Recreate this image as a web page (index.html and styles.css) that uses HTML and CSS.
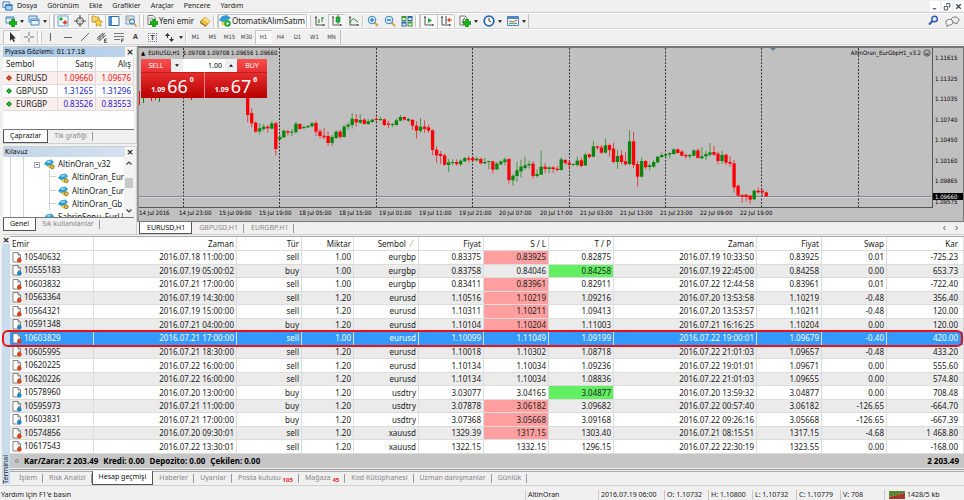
FILE: index.html
```html
<!DOCTYPE html>
<html lang="tr">
<head>
    <meta charset="UTF-8">
    <meta name="viewport" content="width=device-width, initial-scale=1.0">
    <title>EURUSD,H1</title>
    <link rel="stylesheet" href="styles.css">
</head>
<body>
    <!-- shared icons -->
    <svg class="sprite">
        <symbol id="i-down" viewBox="0 0 5 3"><path d="M0 0h5L2.500 3z" fill="#111"/></symbol>
        <symbol id="i-doc" viewBox="0 0 10 11"><path d="M1 .5h5l2.500 2.500v7H1z" fill="#fff" stroke="#666" stroke-width=".8"/><path d="M6 .5V3h2.500" fill="none" stroke="#666" stroke-width=".8"/><path d="M6 5h2v3H6z" fill="#aaa"/><circle cx="7.300" cy="8.300" r="2.300" fill="currentColor"/></symbol>
        <symbol id="i-hat" viewBox="0 0 12 11"><path d="M3 4l1 5 4 1 2-5z" fill="#f3cf4c"/><path d="M0 5l3-4 5-1 3 3-4 3-4 1z" fill="#2f9bd0"/><path d="M3 2l4-1 1 2-4 1z" fill="#8fd3f0"/><circle cx="9" cy="8" r="2.200" fill="#e4b93c" stroke="#5b5b3b" stroke-width=".7"/></symbol>
        <symbol id="i-plus" viewBox="0 0 8 8"><path d="M2.500 0h3v2.500H8v3H5.500V8h-3V5.500H0v-3h2.500z" fill="#12b312" stroke="#067806" stroke-width=".5"/></symbol>
        <symbol id="i-axes" viewBox="0 0 12 12"><path d="M2 1v9h9M1 2.500h2M9.500 9v2" fill="none" stroke="#555"/></symbol>
    </svg>

    <header class="menu-bar">
        <svg class="app-icon" viewBox="0 0 12 12"><path d="M1 1h7v6H1z" fill="#dff0fb" stroke="#3d7ec0"/><path d="M4 4h7v6H4z" fill="#a8d0f0" stroke="#2f6bb0"/><path d="M4 5h7" stroke="#2f6bb0"/></svg>
        <nav class="menu">
            <a href="#">Dosya</a>
            <a href="#">Görünüm</a>
            <a href="#">Ekle</a>
            <a href="#">Grafikler</a>
            <a href="#">Araçlar</a>
            <a href="#">Pencere</a>
            <a href="#">Yardım</a>
        </nav>
        <div class="window-buttons">
            <button aria-label="Minimize"><svg viewBox="0 0 8 8"><path d="M2.500 6h3" stroke="#345" stroke-width="1"/></svg></button>
            <button aria-label="Restore"><svg viewBox="0 0 8 8"><path d="M2 4h3v3H2zM4 2.500V1.500h3v3H6" fill="none" stroke="#345" stroke-width=".8"/></svg></button>
            <button aria-label="Close"><svg viewBox="0 0 8 8"><path d="M2 2l4 4M6 2L2 6" stroke="#345" stroke-width="1.100"/></svg></button>
        </div>
    </header>

    <div class="toolbar">
        <button class="tool drop" aria-label="New chart"><svg viewBox="0 0 12 12"><path d="M1 2h8v6H1z" fill="#e8f4fb" stroke="#4a87bd"/><path d="M1 3h8" stroke="#4a87bd"/><use href="#i-plus" x="4" y="4" width="8" height="8"/></svg><svg class="caret"><use href="#i-down"/></svg></button>
        <button class="tool drop" aria-label="Profiles"><svg viewBox="0 0 12 12"><path d="M1 1h8v6H1z" fill="#cfe6f7" stroke="#4a87bd"/><path d="M3 4h8v6H3z" fill="#e8f4fb" stroke="#4a87bd"/><path d="M3 5.500h8" stroke="#4a87bd"/></svg><svg class="caret"><use href="#i-down"/></svg></button>
        <span class="sep"></span>
        <button class="tool on" aria-label="Market watch"><svg viewBox="0 0 12 12"><path d="M1 1h10v10H1z" fill="#f4faff" stroke="#6ba6d8"/><path d="M4 2l2 2-2 2-2-2z" fill="#1fa51f"/><path d="M8 5l2.500 2.500L8 10 5.500 7.500z" fill="#e04a20"/></svg></button>
        <button class="tool" aria-label="Data window"><svg viewBox="0 0 12 12"><circle cx="6" cy="6" r="3.500" fill="none" stroke="#555"/><path d="M6 0v5M6 7v5M0 6h5M7 6h5" stroke="#555"/></svg></button>
        <button class="tool on" aria-label="Navigator"><svg viewBox="0 0 12 12"><path d="M1 3V1h3l1 1h3v5H1z" fill="#f6d878" stroke="#b98a1c" stroke-width=".8"/><path d="M7.500 3.500l1.300 2.500 2.700.4-2 2 .5 2.800-2.500-1.300L5 11.200l.5-2.800-2-2 2.700-.4z" fill="#ffd84a" stroke="#b98a1c" stroke-width=".8"/></svg></button>
        <button class="tool on" aria-label="Terminal"><svg viewBox="0 0 12 12"><path d="M1 1.500h10v9H1z" fill="#fff" stroke="#2d6dae"/><path d="M1 2h3v8H1z" fill="#4d8ccc"/></svg></button>
        <button class="tool" aria-label="Tester"><svg viewBox="0 0 12 12"><path d="M1 1h8v8H1z" fill="#e4f0f8" stroke="#6c9cc4"/><path d="M3 2v4M5 3v4" stroke="#d09040"/><circle cx="7" cy="6.500" r="2.500" fill="#bfe3fa" stroke="#3d6fa0"/><path d="M9 8.500l2.500 3" stroke="#c49a30" stroke-width="1.500"/></svg></button>
        <span class="sep"></span>
        <button class="tool order"><svg viewBox="0 0 12 12"><path d="M2 .5h5l2 2v7H2z" fill="#fff" stroke="#777"/><path d="M3 3h4M3 5h3" stroke="#999"/><use href="#i-plus" x="4" y="4" width="8" height="8"/></svg>Yeni emir</button>
        <button class="tool" aria-label="MetaEditor"><svg viewBox="0 0 12 12"><path d="M1 7l5-5 5 4-4 5z" fill="#f0bd3c" stroke="#a5741a" stroke-width=".8"/><path d="M4 4l2-2 5 4-2 2z" fill="#ffe48a"/><path d="M1 7l6 4v1L1 8z" fill="#8d5c14"/></svg></button>
        <span class="sep"></span>
        <button class="tool auto on"><svg viewBox="0 0 12 12"><path d="M2 5l1 5 5 1 2-6z" fill="#f3cf4c"/><path d="M0 5l3-4 5-1 4 3-5 3-4 1z" fill="#2f9bd0"/><circle cx="8.500" cy="8.500" r="3.200" fill="#1aa62a"/><path d="M7.500 6.800v3.400l3-1.700z" fill="#fff"/></svg>OtomatikAlımSatım</button>
        <span class="sep"></span>
        <button class="tool" aria-label="Bar chart"><svg viewBox="0 0 12 12"><use href="#i-axes"/><path d="M5 4v4M4 7h1M8 2v5M8 3h2" fill="none" stroke="#19932c"/></svg></button>
        <button class="tool on" aria-label="Candlesticks"><svg viewBox="0 0 12 12"><use href="#i-axes"/><path d="M7 0v9" stroke="#19932c"/><path d="M5 2h4v5H5z" fill="#25b53a" stroke="#0c741c" stroke-width=".6"/></svg></button>
        <button class="tool" aria-label="Line chart"><svg viewBox="0 0 12 12"><use href="#i-axes"/><path d="M2 8c2-5 4-5 5-3l3 2" fill="none" stroke="#19932c"/></svg></button>
        <span class="sep thin"></span>
        <button class="tool" aria-label="Zoom in"><svg viewBox="0 0 12 12"><path d="M7 7l4 4" stroke="#d3a634" stroke-width="2"/><circle cx="5" cy="5" r="3.800" fill="#d6eefc" stroke="#3b83be"/><path d="M3 5h4M5 3v4" stroke="#1d65a8" stroke-width="1.200"/></svg></button>
        <button class="tool" aria-label="Zoom out"><svg viewBox="0 0 12 12"><path d="M7 7l4 4" stroke="#d3a634" stroke-width="2"/><circle cx="5" cy="5" r="3.800" fill="#d6eefc" stroke="#3b83be"/><path d="M3 5h4" stroke="#1d65a8" stroke-width="1.200"/></svg></button>
        <button class="tool" aria-label="Tile windows"><svg viewBox="0 0 12 12"><path d="M.5 1h5v5h-5zM6.500 6.500h5v5h-5z" fill="#3a9a2a"/><path d="M6.500 1h5v5h-5zM.5 6.500h5v5h-5z" fill="#2b5fb4"/><path d="M1.500 3h3v2h-3zM7.500 3h3v2h-3zM1.500 8.500h3v2h-3zM7.500 8.500h3v2h-3z" fill="#e6f4e6"/></svg></button>
        <span class="sep"></span>
        <button class="tool on" aria-label="Auto scroll"><svg viewBox="0 0 12 12"><use href="#i-axes"/><path d="M5 3l4 2.500L5 8z" fill="#1ea832"/></svg></button>
        <button class="tool on" aria-label="Chart shift"><svg viewBox="0 0 12 12"><use href="#i-axes"/><path d="M6 1v8" stroke="#445"/><path d="M7 5l3-2.500v2h2v1h-2v2z" fill="#d8431f"/></svg></button>
        <span class="sep thin"></span>
        <button class="tool drop" aria-label="Indicators"><svg viewBox="0 0 12 12"><path d="M1 1h5l2 2v7H1z" fill="#f5f5f5" stroke="#777"/><path d="M3 8c1 0 1-5 3-5" fill="none" stroke="#555"/><use href="#i-plus" x="4" y="4" width="8" height="8"/></svg><svg class="caret"><use href="#i-down"/></svg></button>
        <button class="tool drop" aria-label="Periods"><svg viewBox="0 0 12 12"><circle cx="6" cy="6" r="4.800" fill="#fff" stroke="#2465b5" stroke-width="1.800"/><path d="M6 3v3l2 1" fill="none" stroke="#333"/></svg><svg class="caret"><use href="#i-down"/></svg></button>
        <button class="tool drop" aria-label="Templates"><svg viewBox="0 0 12 12"><path d="M.5 1.500h11v9H.5z" fill="#f2f9ff" stroke="#4d87bf"/><path d="M1 3h10" stroke="#4d87bf" stroke-width="2"/><path d="M2 7l2-1 2 1 4-2" fill="none" stroke="#c8562b"/><path d="M2 9l3-1 2 1 3-1" fill="none" stroke="#2c9840"/></svg><svg class="caret"><use href="#i-down"/></svg></button>
        <span class="toolbar-end"></span>
        <div class="toolbar-right">
            <button class="tool" aria-label="Search"><svg viewBox="0 0 12 12"><circle cx="7.500" cy="4" r="2.800" fill="#e9f2ff" stroke="#2c55b5" stroke-width="1.400"/><path d="M5.500 6L2 9.500" stroke="#2c55b5" stroke-width="2"/></svg></button>
            <button class="tool chat" aria-label="Chat"><svg viewBox="0 0 15 12"><path d="M6 5c0-4 8-4 8 0 0 1-1 2-2 2.500V9L10 8C7 8 6 6.500 6 5z" fill="#eee" stroke="#777"/><path d="M1 7c0-3.500 7-3.500 7 0 0 2-2 3-4 3l-2 1.500V9.500C1 9 1 8 1 7z" fill="#f5f5f5" stroke="#777"/></svg></button>
        </div>
    </div>

    <div class="toolbar">
        <button class="tool on" aria-label="Cursor"><svg viewBox="0 0 12 12"><path d="M4 1v9l2-2 1.500 3 1.500-.7L7.500 7.500H10z" fill="#333"/></svg></button>
        <button class="tool" aria-label="Crosshair"><svg viewBox="0 0 12 12"><path d="M6 1v4M6 7v4M1 6h4M7 6h4" stroke="#777"/></svg></button>
        <span class="sep"></span>
        <button class="tool" aria-label="Vertical line"><svg viewBox="0 0 12 12"><path d="M5.500 2v8" stroke="#666"/></svg></button>
        <button class="tool" aria-label="Horizontal line"><svg viewBox="0 0 12 12"><path d="M2 6.500h8" stroke="#666"/></svg></button>
        <button class="tool" aria-label="Trend line"><svg viewBox="0 0 12 12"><path d="M2 10l8-8" stroke="#666"/></svg></button>
        <button class="tool" aria-label="Channel"><svg viewBox="0 0 12 12"><path d="M1 7l6-5M1 9l8-7M3 10l7-6M4 5v4M7 3v4" stroke="#555" stroke-width=".9"/><path d="M11 8H8.500v3.500H11M8.500 9.700h2" fill="none" stroke="#444" stroke-width=".8"/></svg></button>
        <button class="tool" aria-label="Fibonacci"><svg viewBox="0 0 12 12"><path d="M1 2.500h10M1 5.500h10M1 8.500h6" stroke="#777"/><path d="M11 8H8.500v3.500M8.500 9.700h2" fill="none" stroke="#444" stroke-width=".8"/></svg></button>
        <button class="tool letter">A</button>
        <button class="tool letter"><span class="label-box">T</span></button>
        <button class="tool drop" aria-label="Arrows"><svg viewBox="0 0 12 12"><path d="M1 5l2.500-3L6 5zM3 5h1v2H3zM5 8h5l-2.500 3zM7 6h1v2H7z" fill="#333"/></svg><svg class="caret"><use href="#i-down"/></svg></button>
        <span class="sep thin"></span>
        <button class="tool period">M1</button>
        <button class="tool period">M5</button>
        <button class="tool period">M15</button>
        <button class="tool period">M30</button>
        <button class="tool period on">H1</button>
        <button class="tool period">H4</button>
        <button class="tool period">D1</button>
        <button class="tool period">W1</button>
        <button class="tool period">MN</button>
        <span class="toolbar-end"></span>
    </div>

    <main class="workspace">
        <aside class="side">
            <section class="panel">
                <div class="panel-title"><h2>Piyasa Gözlemi: 01:17:18</h2><button class="close" aria-label="Close">×</button></div>
                <div class="quotes-box">
                    <table class="quotes">
                        <thead>
                            <tr><th>Sembol</th><th>Satış</th><th>Alış</th></tr>
                        </thead>
                        <tbody>
                            <tr class="down"><td><i class="mark"></i>EURUSD</td><td>1.09660</td><td>1.09676</td></tr>
                            <tr><td><i class="mark"></i>GBPUSD</td><td>1.31265</td><td>1.31296</td></tr>
                            <tr class="tint"><td><i class="mark"></i>EURGBP</td><td>0.83526</td><td>0.83553</td></tr>
                        </tbody>
                    </table>
                </div>
                <div class="tabs side-tabs">
                    <a class="tab active" href="#">Çaprazlar</a>
                    <a class="tab" href="#">Tik grafiği</a>
                </div>
            </section>

            <section class="panel navigator">
                <div class="panel-title"><h2>Kılavuz</h2><button class="close" aria-label="Close">×</button></div>
                <div class="tree-box">
                    <ul class="tree">
                        <li class="open"><i class="minus"></i><svg><use href="#i-hat"/></svg>AltinOran_v32
                            <ul>
                                <li><svg><use href="#i-hat"/></svg>AltinOran_Eur</li>
                                <li><svg><use href="#i-hat"/></svg>AltinOran_Eur</li>
                                <li><svg><use href="#i-hat"/></svg>AltinOran_Gb</li>
                            </ul>
                        </li>
                        <li class="next"><svg><use href="#i-hat"/></svg>SabrinSonu_EurU</li>
                    </ul>
                    <div class="scrollbar">
                        <svg viewBox="0 0 8 8"><path d="M1.500 5.500L4 3l2.500 2.500" fill="none" stroke="#444" stroke-width="1.200"/></svg>
                        <span class="thumb"></span>
                        <svg viewBox="0 0 8 8"><path d="M1.500 2.500L4 5l2.500-2.500" fill="none" stroke="#444" stroke-width="1.200"/></svg>
                    </div>
                </div>
                <div class="tabs side-tabs">
                    <a class="tab active" href="#">Genel</a>
                    <a class="tab" href="#">Sık kullanılanlar</a>
                </div>
            </section>
        </aside>

        <section class="chart">
            <div class="chart-window">
                <div class="plot">
                    <svg class="candles" id="candles"></svg>
                    <div class="chart-title"><span class="up-mark">▲</span><span>EURUSD,H1</span><span>1.09708 1.09708 1.09656 1.09660</span></div>
                    <div class="expert">AltinOran_EurGbpH1_v3.2 <svg viewBox="0 0 10 10"><circle cx="5" cy="5" r="4" fill="none" stroke="#222" stroke-width=".8"/><path d="M3 3.800h1M6 3.800h1M2.800 6c1 1.800 3.400 1.800 4.400 0z" fill="none" stroke="#222" stroke-width=".8"/></svg></div>
                    <form class="trade">
                        <button type="button" class="side-btn">SELL</button>
                        <div class="volume">
                            <button type="button" aria-label="Less"><svg><use href="#i-down"/></svg></button>
                            <input type="text" value="1.00" aria-label="Volume">
                            <button type="button" aria-label="More"><svg class="flip"><use href="#i-down"/></svg></button>
                        </div>
                        <button type="button" class="side-btn">BUY</button>
                        <button type="button" class="price"><small>1.09</small><b>66</b><sup>0</sup></button>
                        <button type="button" class="price"><small>1.09</small><b>67</b><sup>6</sup></button>
                    </form>
                </div>
                <div class="price-axis">
                    <span>1.11615</span><span>1.11325</span><span>1.11035</span><span>1.10740</span><span>1.10450</span><span>1.10160</span><span>1.09865</span><span>1.09575</span>
                    <span class="current">1.09660</span>
                </div>
                <div class="time-axis">
                    <span>14 Jul 2016</span><span>14 Jul 23:00</span><span>15 Jul 09:00</span><span>15 Jul 19:00</span><span>18 Jul 05:00</span><span>18 Jul 15:00</span><span>19 Jul 01:00</span><span>19 Jul 11:00</span><span>19 Jul 21:00</span><span>20 Jul 07:00</span><span>20 Jul 17:00</span><span>21 Jul 03:00</span><span>21 Jul 13:00</span><span>21 Jul 23:00</span><span>22 Jul 09:00</span><span>22 Jul 19:00</span>
                </div>
            </div>
            <div class="tabs chart-tabs">
                <a class="tab active" href="#">EURUSD,H1</a>
                <a class="tab" href="#">GBPUSD,H1</a>
                <a class="tab" href="#">EURGBP,H1</a>
                <div class="tab-arrows"><svg viewBox="0 0 5 6"><path d="M3.500 1l-2 2 2 2" fill="none" stroke="#555"/></svg><svg viewBox="0 0 5 6"><path d="M1.500 1l2 2-2 2" fill="none" stroke="#555"/></svg></div>
            </div>
        </section>
    </main>

    <section class="terminal">
        <div class="terminal-side"><button class="close" aria-label="Close">×</button><span>Terminal</span></div>
        <div class="terminal-body">
            <div class="history-box">
                <table class="history">
                    <colgroup><col class="c-order"><col class="c-time"><col class="c-std"><col class="c-lot"><col class="c-std"><col class="c-std"><col class="c-std"><col class="c-std"><col class="c-time"><col class="c-std"><col class="c-std"><col></colgroup>
                    <thead>
                        <tr><th>Emir</th><th>Zaman</th><th>Tür</th><th>Miktar</th><th>Sembol <span class="sort">⁄</span></th><th>Fiyat</th><th>S / L</th><th>T / P</th><th>Zaman</th><th>Fiyat</th><th>Swap</th><th>Kar</th></tr>
                    </thead>
                    <tbody id="rows"></tbody>
                    <tfoot>
                        <tr><td colspan="11"><i class="dot"></i><span>Kar/Zarar: 2 203.49</span><span>Kredi: 0.00</span><span>Depozito: 0.00</span><span>Çekilen: 0.00</span></td><td>2 203.49</td></tr>
                    </tfoot>
                </table>
            </div>
            <div class="tabs terminal-tabs">
                <a class="tab" href="#">İşlem</a>
                <a class="tab" href="#">Risk Analizi</a>
                <a class="tab active" href="#">Hesap geçmişi</a>
                <a class="tab" href="#">Haberler</a>
                <a class="tab" href="#">Uyarılar</a>
                <a class="tab" href="#">Posta kutusu <sub>105</sub></a>
                <a class="tab" href="#">Mağaza <sub>45</sub></a>
                <a class="tab" href="#">Kod Kütüphanesi</a>
                <a class="tab" href="#">Uzman danışmanlar</a>
                <a class="tab" href="#">Günlük</a>
            </div>
        </div>
    </section>

    <footer class="status">
        <span class="hint">Yardım için F1'e basın</span>
        <span class="s-name">AltinOran</span>
        <span class="s-date">2016.07.19 06:00</span>
        <span>O: 1.10732</span>
        <span>H: 1.10800</span>
        <span>L: 1.10732</span>
        <span>C: 1.10779</span>
        <span>V: 708</span>
        <span class="s-net"><svg viewBox="0 0 16 8"><path d="M0 0h16v2L0 6z" fill="#5c8f2b"/><path d="M16 2v6H0V6z" fill="#b8352b"/><path d="M2.500 0v8M5.500 0v8M8.500 0v8M11.500 0v8M14.500 0v8" stroke="#333" stroke-width=".5" opacity=".5"/></svg>1428/5 kb</span>
    </footer>

    <script src="script.js"></script>
</body>
</html>
```

FILE: styles.css
```css
* {
    box-sizing: border-box;
}
body {
    margin: 0;
    height: 100vh;
    display: flex;
    flex-direction: column;
    background-color: #f0f0f0;
    color: #222;
    font: 7px/10px "Noto Sans", "Open Sans", sans-serif;
    overflow: hidden;
}
a {
    color: inherit;
    text-decoration: none;
}
button {
    margin: 0;
    padding: 0;
    border: 0;
    background: none;
    color: inherit;
    font: inherit;
}
h2 {
    margin: 0;
    font: inherit;
}
svg {
    display: block;
    flex: none;
}
.sprite {
    position: absolute;
    width: 0;
    height: 0;
}

/* menu */
.menu-bar {
    display: flex;
    align-items: center;
    flex: none;
    height: 13px;
    padding-left: 2px;
    border-bottom: 1px solid #cfcfcf;
}
.app-icon {
    width: 11px;
    height: 11px;
}
.menu {
    display: flex;
    gap: 10px;
    margin-left: 4px;
}
.window-buttons {
    display: flex;
    gap: 2px;
    margin-left: auto;
}
.window-buttons button {
    width: 10px;
    height: 10px;
    background-color: #fff;
}
.window-buttons svg {
    width: 9px;
    height: 9px;
}

/* toolbars */
.toolbar {
    display: flex;
    flex: none;
    height: 16px;
    padding-left: 3px;
    border-top: 1px solid #fff;
    border-bottom: 1px solid #d6d6d6;
    font-size: 8px;
}
.tool {
    display: flex;
    align-items: center;
    justify-content: center;
    gap: 1px;
    width: 17px;
}
.tool svg {
    width: 12px;
    height: 12px;
}
.tool.on {
    background-color: #f8f8f8;
    box-shadow: inset 1px 1px #c4c4c4;
}
.drop {
    width: 24px;
    gap: 3px;
}
.drop:nth-child(-n+2) {
    width: 23px;
}
.tool .caret {
    width: 4px;
    height: 3px;
}
.order {
    width: 52px;
}
.auto {
    width: 88px;
}
.letter {
    color: #444;
    font-weight: bold;
    font-size: 7px;
}
.label-box {
    width: 9px;
    height: 9px;
    border: 1px dotted #777;
    line-height: 7px;
}
.period {
    color: #444;
    font: 6px/10px "DejaVu Sans Condensed", "DejaVu Sans", sans-serif;
}
.sep {
    width: 5px;
    border: 0 solid #c8c8c8;
    border-width: 0 1px;
    background-color: #fafafa;
    margin: 1px 0;
}
.sep.thin {
    width: 2px;
    border-width: 0 0 0 1px;
}
.toolbar-end {
    width: 1px;
    background-color: #c0c0c0;
}
.toolbar-right {
    display: flex;
    gap: 3px;
    margin-left: auto;
    padding-right: 3px;
}
.tool.chat svg {
    width: 15px;
}

/* workspace */
.workspace {
    display: flex;
    flex: 4 1 0;
    min-height: 0;
    padding-top: 1px;
}
.side {
    display: flex;
    flex-direction: column;
    gap: 2px;
    width: 137px;
    padding-left: 3px;
}
.panel {
    display: flex;
    flex-direction: column;
    height: 98px;
    padding-right: 2px;
    border: 1px solid #d0d0d0;
    border-left: 0;
}
.navigator {
    flex: 1;
    min-height: 0;
    height: auto;
    padding-bottom: 3px;
}
.panel-title {
    display: flex;
    align-items: center;
    justify-content: space-between;
    flex: none;
    height: 10px;
    padding-left: 2px;
    background: linear-gradient(90deg, #a8c8e6, #bcd3ea) no-repeat #f6f6f6;
    background-size: 122px 100%;
}
.navigator .panel-title {
    background-image: linear-gradient(90deg, #c4d5e6, #d4e1ee);
}
.panel-title h2 {
    color: #000;
    font: 7px/10px "DejaVu Sans Condensed", "DejaVu Sans", sans-serif;
}
.close {
    width: 8px;
    font: bold 9px/8px "DejaVu Sans", sans-serif;
}
.quotes-box {
    flex: 1;
    background-color: #fff;
    border-bottom: 1px solid #777;
}
.quotes {
    width: 100%;
    border-collapse: separate;
    border-spacing: 0;
    table-layout: fixed;
    font-size: 8px;
    line-height: 12px;
}
.quotes th, .quotes td {
    padding: 0 2px 0 0;
    border: 1px solid #dcdcdc;
    border-width: 0 1px 1px 0;
    text-align: right;
    font-weight: normal;
    color: #2020d0;
}
.quotes th {
    color: #222;
    height: 15px;
}
.quotes th:first-child, .quotes td:first-child {
    width: 55px;
    padding-left: 3px;
    text-align: left;
    color: #222;
}
.quotes .down td:not(:first-child) {
    color: #f01414;
}
.quotes .down, .quotes .tint {
    background-color: #fdeeee;
}
.mark {
    display: inline-block;
    width: 4px;
    height: 4px;
    margin: 0 5px 1px 1px;
    background-color: #2ecc40;
    border: 1px solid #0f7a1c;
    transform: rotate(45deg);
}
.down .mark {
    background-color: #f0672f;
    border-color: #a03010;
}

/* tabs */
.tabs {
    display: flex;
    flex: none;
    height: 13px;
    color: #888;
}
.tab {
    position: relative;
    padding: 0 6px 0 7px;
    line-height: 12px;
    white-space: nowrap;
}
.tab:not(.active)::after {
    content: "";
    position: absolute;
    right: 0;
    top: 2px;
    height: 9px;
    border-right: 1px solid #999;
}
.tab.active {
    color: #111;
    background-color: #fff;
    border: 1px solid #555;
    border-top: 0;
}
.side-tabs .tab {
    padding: 0 6px;
}

/* navigator */
.tree-box {
    display: flex;
    flex: 1;
    min-height: 0;
    background-color: #fff;
    border-bottom: 1px solid #777;
}
.tree, .tree ul {
    margin: 0;
    padding: 0;
    list-style: none;
}
.tree {
    flex: 1;
    overflow: hidden;
    padding-left: 31px;
    font-size: 8px;
    line-height: 13px;
    white-space: nowrap;
    background: linear-gradient(#d4d4d4, #d4d4d4) 7px 0 / 1px 100% no-repeat, linear-gradient(#d4d4d4, #d4d4d4) 20px 0 / 1px 100% no-repeat;
}
.tree svg {
    display: inline-block;
    width: 11px;
    height: 11px;
    margin-right: 3px;
    vertical-align: middle;
}
.tree ul {
    margin-left: 15px;
    border-left: 1px solid #d0d0d0;
}
.tree ul li {
    padding-left: 8px;
    background: linear-gradient(#d0d0d0, #d0d0d0) 0 6px / 6px 1px no-repeat;
}
.tree .next {
    padding-left: 10px;
}
.minus {
    display: inline-block;
    width: 6px;
    height: 6px;
    margin-right: 4px;
    border: 1px solid #a8a8b8;
    vertical-align: middle;
    background: linear-gradient(#5060a0, #5060a0) center / 2px 1px no-repeat;
}
.scrollbar {
    display: flex;
    flex-direction: column;
    justify-content: space-between;
    width: 10px;
    padding: 2px 1px;
    background-color: #f2f2f2;
}
.scrollbar svg {
    width: 8px;
    height: 8px;
}
.thumb {
    height: 10px;
    margin-bottom: 8px;
    background-color: #c8c8c8;
}

/* chart */
.chart {
    flex: 1;
    display: flex;
    flex-direction: column;
    min-width: 0;
}
.chart-window {
    flex: 1;
    display: grid;
    grid-template: 1fr 13px / 1fr 30px;
    min-height: 0;
    background-color: #c0c0c0;
    border: 1px solid #777;
    border-left: 2px solid #999;
    border-top-width: 2px;
    font: 6px/8px "DejaVu Sans Condensed", "DejaVu Sans", sans-serif;
    color: #000;
}
.plot {
    position: relative;
    border-right: 1px solid #555;
    border-bottom: 1px solid #555;
    min-height: 0;
}
.candles {
    position: absolute;
    inset: 0;
    width: 100%;
    height: 100%;
}
.chart-title {
    position: absolute;
    left: 2px;
    top: 1px;
    display: flex;
    gap: 3px;
}
.expert {
    position: absolute;
    right: 1px;
    top: 1px;
    display: flex;
    gap: 2px;
}
.expert svg {
    width: 8px;
    height: 8px;
}
.trade {
    position: absolute;
    left: 2px;
    top: 11px;
    display: grid;
    grid-template: 13px 26px / 30px 33px 33px 30px;
    width: 126px;
    color: #fff;
    font-family: "Noto Sans", "Open Sans", sans-serif;
}
.side-btn {
    background: linear-gradient(#f85050, #e83030);
    font-size: 7px;
}
.volume {
    grid-column: 2 / 4;
    display: flex;
    background-color: #fff;
}
.volume button {
    display: flex;
    align-items: center;
    justify-content: center;
    width: 12px;
    background-color: #eee;
}
.volume svg {
    width: 4px;
    height: 3px;
}
.volume .flip {
    transform: rotate(180deg);
}
.volume input {
    flex: 1;
    min-width: 0;
    padding: 0 3px 0 0;
    border: 0;
    text-align: right;
    font: 7px/12px "Noto Sans", "Open Sans", sans-serif;
}
.price {
    grid-column: span 2;
    display: flex;
    align-items: center;
    justify-content: center;
    gap: 2px;
    background: linear-gradient(#e62e2e, #b80000);
    border-top: 1px solid #c02020;
}
.price + .price {
    border-left: 1px solid #e88;
}
.price small {
    align-self: flex-end;
    font: bold 7px/16px "Noto Sans", sans-serif;
}
.price b {
    font: 18px/24px "Noto Sans", sans-serif;
}
.price sup {
    align-self: flex-start;
    font: bold 7px/14px "Noto Sans", sans-serif;
}
.price-axis {
    position: relative;
    display: flex;
    flex-direction: column;
    justify-content: space-between;
    padding: 6px 0 2px 2px;
}
.price-axis .current {
    position: absolute;
    left: 0;
    right: 0;
    bottom: 8px;
    padding-left: 2px;
    line-height: 7px;
    background-color: #000;
    color: #fff;
}
.time-axis {
    display: grid;
    grid-template-columns: repeat(9, 40px) 41px repeat(9, 40px);
    padding-top: 1px;
    white-space: nowrap;
}
.chart-tabs {
    padding-left: 2px;
    border-bottom: 1px solid #d0d0d0;
}
.tab-arrows {
    display: flex;
    gap: 7px;
    margin: 3px 5px 0 auto;
}
.tab-arrows svg {
    width: 5px;
    height: 6px;
}

/* terminal */
.terminal {
    display: flex;
    flex: none;
    height: 251px;
    padding-top: 1px;
    border-bottom: 1px solid #d0d0d0;
}
.terminal-side {
    display: flex;
    flex-direction: column;
    justify-content: space-between;
    width: 8px;
    margin-left: 2px;
    margin-bottom: 1px;
    background: linear-gradient(#f0f0f0 8px, #c9dcee 8px);
}
.terminal-side span {
    writing-mode: vertical-rl;
    transform: rotate(180deg);
    line-height: 8px;
}
.terminal-body {
    flex: 1;
    display: flex;
    flex-direction: column;
    min-width: 0;
}
.history-box {
    flex: 1;
    min-height: 0;
    border-bottom: 1px solid #999;
    padding-bottom: 1px;
}
.history {
    width: 100%;
    height: 100%;
    table-layout: fixed;
    border-collapse: separate;
    border-spacing: 0;
    background-color: #fff;
    border-top: 1px solid #aaa;
    font-size: 8px;
    line-height: 10px;
}
.c-order {
    width: 84px;
}
.c-time {
    width: 143px;
}
.c-std {
    width: 65px;
}
.c-lot {
    width: 52px;
}
.history th, .history td {
    padding: 0 2px 0 0;
    border-right: 1px solid #dcdcdc;
    border-bottom: 1px solid #dcdcdc;
    text-align: right;
    font-weight: normal;
    white-space: nowrap;
}
.history th, .history tfoot td {
    height: 14px;
}
.history th:first-child, .history td:first-child {
    padding-left: 2px;
    text-align: left;
}
.history th:last-child, .history td:last-child {
    padding-right: 5px;
}
.history td svg {
    display: inline-block;
    width: 10px;
    height: 11px;
    margin: -1px 2px 0 0;
    vertical-align: middle;
    color: #d84318;
}
.history td svg.buy {
    color: #1f86c8;
}
.history .sort {
    margin: 0 4px 0 3px;
    color: #999;
}
.history tbody tr:nth-child(even) {
    background-color: #ebebeb;
}
.history td.stop {
    background-color: #ff9f9f;
}
.history td.profit {
    background-color: #62f062;
}
.history tbody tr.selected {
    position: relative;
    background-color: #3399ff;
    color: #fff;
}
.ring {
    position: absolute;
    inset: -2px 1px -1px -8px;
    border: 2px solid #e3121b;
    border-radius: 6px;
}
.history tfoot td {
    background-color: #c6c6c6;
    border: 0;
    font-weight: bold;
    color: #000;
}
.history tfoot span {
    margin-right: 5px;
}
.dot {
    display: inline-block;
    width: 4px;
    height: 4px;
    margin: 0 5px 1px 3px;
    border: 1px solid #888;
    border-radius: 2px;
}
.terminal-tabs {
    height: 14px;
    margin-top: 1px;
    padding-left: 3px;
    border-top: 1px solid #aaa;
}
.terminal-tabs .tab {
    padding: 0 6px;
}
.terminal-tabs .active {
    margin-top: -1px;
}
.tab sub {
    color: #e02020;
    font: bold 6px/6px "Noto Sans", sans-serif;
    vertical-align: -2px;
}

/* status bar */
.status {
    display: flex;
    flex: none;
    align-items: center;
    height: 13px;
    margin-top: 1px;
    padding-top: 2px;
}
.status span {
    width: 44px;
    padding-left: 2px;
    border-left: 1px solid #c8c8c8;
    white-space: nowrap;
}
.status .hint {
    flex: 1;
    padding-left: 1px;
    border-left: 0;
}
.status .s-name {
    width: 73px;
}
.status .s-date {
    width: 66px;
}
.status .s-net {
    display: flex;
    align-items: center;
    gap: 2px;
    width: 80px;
    padding-left: 4px;
}
.s-net svg {
    width: 16px;
    height: 8px;
}
```

FILE: script.js
```js
// type, body top, body bottom, high, low - in thirds of a pixel
const candles = `r 150 213 140 235|r 207 238 193 250|r 236 263 232 267|g 253 262 238 271|g 248 255 240 262|r 248 253 243 266|g 238 254 231 256|r 238 315 233 334|g 279 286 272 288|g 260 280 257 282
r 262 266 257 275|g 263 266 255 276|g 239 264 234 270|r 240 255 238 257|g 249 252 245 256|g 246 250 243 252|g 238 247 234 250|r 237 263 230 276|r 262 276 255 284|r 275 280 251 286
r 276 297 262 305|g 279 297 273 305|g 263 282 259 285|r 263 279 258 285|g 248 279 243 281|g 242 248 235 257|g 224 243 207 254|r 225 235 210 248|g 228 236 210 240|r 227 240 222 242
g 232 240 225 242|g 227 234 225 237|r 225 228 218 235|g 225 228 217 232|r 226 243 223 246|r 238 242 230 252|g 240 243 237 250|g 229 243 223 245|g 219 230 213 232|r 219 227 217 230
g 225 230 222 234|r 228 245 224 258|r 245 260 232 284|g 248 260 222 267|r 248 255 229 266|r 250 260 242 267|r 259 318 256 334|r 317 334 307 356|r 330 336 321 360|r 334 362 328 365
g 355 363 345 385|g 354 357 346 364|r 354 360 346 366|g 350 361 346 366|g 342 352 339 354|r 343 347 336 354|r 342 349 336 354|g 344 349 338 352|r 345 358 340 361|g 354 358 341 361
g 351 354 350 376|r 352 377 350 389|g 359 376 354 378|g 352 361 350 364|g 346 354 340 364|r 345 408 342 419|g 395 409 391 425|g 379 396 354 414|g 368 382 348 402|g 364 372 338 378
g 360 364 350 374|r 359 396 351 404|g 390 396 376 402|g 368 392 320 393|r 368 375 358 388|g 370 375 368 388|r 370 375 367 387|r 374 378 366 382|g 346 378 340 380|r 348 357 345 362
r 356 362 348 376|g 360 363 359 365|g 350 363 338 368|r 349 366 341 370|g 332 364 326 366|r 331 339 328 344|g 307 338 290 340|r 307 311 305 318|r 310 326 303 330|g 304 326 283 328
r 303 318 299 338|r 314 354 296 358|g 336 354 317 375|r 334 354 320 361|r 352 361 325 364|g 292 360 258 364|r 292 363 263 372|r 360 398 351 428|g 351 398 340 401|r 351 370 348 376
g 364 369 358 379|g 354 368 349 371|g 338 355 336 358|g 333 339 326 342|g 331 335 328 340|g 327 331 325 344|g 316 330 313 332|r 316 327 313 329|r 323 335 318 337|r 333 337 328 344
g 333 337 330 344|g 319 335 317 337|r 319 342 313 344|g 337 343 310 345|g 330 337 320 349|g 325 332 297 338|r 324 332 306 336|r 329 351 323 360|g 333 351 320 360|r 332 356 329 363
r 354 359 336 368|r 358 430 348 446|r 425 455 422 458|r 453 458 451 477|r 452 459 450 472|r 455 467 452 479|g 440 466 437 469|r 440 445 430 449|r 440 445 436 459|r 445 457 443 459`
    .split(/[|\n]/).map(c => c.split(' ').map((v, i) => i ? Number(v) : v));

const colors = { r: '#fb0006', g: '#0b840b' };
let svg = '';

// day separators
for (let i = 0; i < 8; i++) {
    const x = Math.round(44 + i * 96.4) + 0.5;
    svg += `<path d="M${x} 0v400" stroke="#333" stroke-dasharray="2 1.500"/>`;
}

// bid line
svg += '<rect y="148" width="100%" height="1" fill="#7f8d9b"/><rect y="149" width="100%" height="1" fill="#d0d0d0"/>';
svg += '<path d="M631 0h6l-3 3z" fill="#5f7f96"/>';

// start of the series, mostly behind the trade box
svg += '<path d="M.5 43v14M12.500 46v7M16.500 46v6M52.500 46v6" stroke="#fb0006"/><path d="M4.500 46v9M20.500 46v8" stroke="#0b840b"/>';

svg += '<g transform="translate(-9 -4) scale(.33333)">';
candles.forEach(([type, top, bottom, high, low], i) => {
    const x = 353 + i * 12.06;
    const color = colors[type];
    svg += `<path d="M${x} ${high}V${low}" stroke="${color}" stroke-width="2"/>`;
    svg += `<rect x="${x - 5}" y="${top}" width="10" height="${bottom - top}" fill="${color}"/>`;
});
svg += '</g>';
document.getElementById('candles').innerHTML = svg;

const orders = [
    ['10540632', '2016.07.18 11:00:00', 'sell', '1.00', 'eurgbp', '0.83375', '0.83925', '0.82875', '2016.07.19 10:33:50', '0.83925', '0.01', '-725.23', 'stop'],
    ['10555183', '2016.07.19 05:00:02', 'buy', '1.00', 'eurgbp', '0.83758', '0.84046', '0.84258', '2016.07.19 22:45:00', '0.84258', '0.00', '653.73', 'profit'],
    ['10603832', '2016.07.21 17:00:00', 'sell', '1.00', 'eurgbp', '0.83411', '0.83961', '0.82911', '2016.07.22 12:44:58', '0.83961', '0.01', '-722.40', 'stop'],
    ['10563364', '2016.07.19 14:30:00', 'sell', '1.20', 'eurusd', '1.10516', '1.10219', '1.09216', '2016.07.20 13:53:58', '1.10219', '-0.48', '356.40', 'stop'],
    ['10564321', '2016.07.19 15:00:00', 'sell', '1.20', 'eurusd', '1.10311', '1.10211', '1.09413', '2016.07.20 13:53:57', '1.10211', '-0.48', '120.00', 'stop'],
    ['10591348', '2016.07.21 04:00:00', 'buy', '1.20', 'eurusd', '1.10104', '1.10204', '1.11003', '2016.07.21 16:16:25', '1.10204', '0.00', '120.00', 'stop'],
    ['10603829', '2016.07.21 17:00:00', 'sell', '1.00', 'eurusd', '1.10099', '1.11049', '1.09199', '2016.07.22 19:00:01', '1.09679', '-0.40', '420.00', 'selected'],
    ['10605995', '2016.07.21 18:30:00', 'sell', '1.20', 'eurusd', '1.10018', '1.10302', '1.08718', '2016.07.22 21:01:03', '1.09657', '-0.48', '433.20'],
    ['10620225', '2016.07.22 16:00:00', 'sell', '1.20', 'eurusd', '1.10134', '1.10034', '1.09236', '2016.07.22 19:01:01', '1.09671', '0.00', '555.60'],
    ['10620226', '2016.07.22 16:00:00', 'sell', '1.20', 'eurusd', '1.10134', '1.10034', '1.08836', '2016.07.22 21:01:03', '1.09655', '0.00', '574.80'],
    ['10578960', '2016.07.20 13:00:00', 'buy', '1.20', 'usdtry', '3.03077', '3.04165', '3.04877', '2016.07.20 13:59:32', '3.04877', '0.00', '708.48', 'profit'],
    ['10595973', '2016.07.21 11:00:00', 'buy', '1.20', 'usdtry', '3.07878', '3.06182', '3.09682', '2016.07.22 00:57:40', '3.06182', '-126.65', '-664.70', 'stop'],
    ['10603831', '2016.07.21 17:00:00', 'buy', '1.20', 'usdtry', '3.07368', '3.05668', '3.09168', '2016.07.22 09:26:16', '3.05668', '-126.65', '-667.39', 'stop'],
    ['10574856', '2016.07.20 09:30:01', 'sell', '1.20', 'xauusd', '1329.39', '1317.15', '1303.40', '2016.07.21 08:15:51', '1317.15', '-4.68', '1 468.80', 'stop'],
    ['10617543', '2016.07.22 13:30:01', 'sell', '1.20', 'xauusd', '1322.15', '1332.15', '1296.15', '2016.07.22 22:30:19', '1323.55', '0.00', '-168.00']
];

document.getElementById('rows').innerHTML = orders.map(order => {
    const state = order[12];
    const cells = order.slice(0, 12).map((text, i) => {
        if (i === 0) {
            const ring = state === 'selected' ? '<span class="ring"></span>' : '';
            return `<td><svg class="${order[2]}"><use href="#i-doc"/></svg>${text}${ring}</td>`;
        }
        if (i === 6 && state === 'stop') return `<td class="stop">${text}</td>`;
        if (i === 7 && state === 'profit') return `<td class="profit">${text}</td>`;
        return `<td>${text}</td>`;
    });
    return `<tr class="${state === 'selected' ? 'selected' : ''}">${cells.join('')}</tr>`;
}).join('');
```
